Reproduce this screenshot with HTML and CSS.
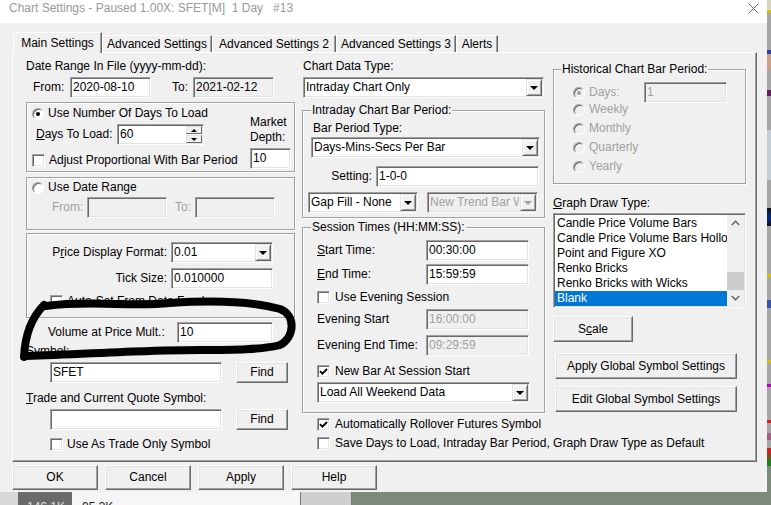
FILE: index.html
```html
<!DOCTYPE html>
<html>
<head>
<meta charset="utf-8">
<title>Chart Settings</title>
<link rel="stylesheet" href="styles.css">
</head>
<body>
<div class="screen">
  <div class="dialog">
    <div class="titlebar">
      <span class="title">Chart Settings - Paused 1.00X: SFET[M]  1 Day   #13</span>
      <svg class="close" viewBox="0 0 11 11"><path d="M0.5 0.5L10.5 10.5M10.5 0.5L0.5 10.5" stroke="#6a6a6a" stroke-width="1" fill="none"/></svg>
    </div>
    <div class="dlg-body">
      <div class="tabs">
        <div class="tab active t1">Main Settings</div>
        <div class="tab t2">Advanced Settings</div>
        <div class="tab t3">Advanced Settings 2</div>
        <div class="tab t4">Advanced Settings 3</div>
        <div class="tab t5">Alerts</div>
      </div>
      <div class="panel">
        <div class="col col-left">
          <div class="caption cap-date">Date Range In File (yyyy-mm-dd):</div>
          <div class="row row-date">
            <span class="lab lab-from">From:</span>
            <span class="field f-date">2020-08-10</span>
            <span class="lab lab-to">To:</span>
            <span class="field f-date ro">2021-02-12</span>
          </div>
          <div class="grp grp-days">
            <div class="days-main">
              <div class="opt opt-first"><span class="radio on"></span>Use Number Of Days To Load</div>
              <div class="row row-days">
                <span class="lab lab-days"><u>D</u>ays To Load:</span>
                <span class="field f-spin"><span class="txt">60</span><span class="spin"><span class="sb"><i class="tri-up"></i></span><span class="sb"><i class="tri-down"></i></span></span></span>
              </div>
              <div class="opt opt-adjust"><span class="check"></span>Adjust Proportional With Bar Period</div>
            </div>
            <div class="days-side">
              <div class="md-lbl">Market<br>Depth:</div>
              <span class="field f-md">10</span>
            </div>
          </div>
          <div class="grp grp-range">
            <div class="opt opt-range"><span class="radio"></span>Use Date Range</div>
            <div class="row row-range">
              <span class="lab dis lab-rfrom">From:</span><span class="field dis f-range"></span>
              <span class="lab dis lab-rto">To:</span><span class="field dis f-range"></span>
            </div>
          </div>
          <div class="grp grp-price">
            <div class="row row-pf"><span class="lab lab-pf">P<u>r</u>ice Display Format:</span><span class="field combo f-pf"><span class="txt">0.01</span><span class="dd"></span></span></div>
            <div class="row row-tick"><span class="lab lab-pf">Tick Size:</span><span class="field f-pf">0.010000</span></div>
            <div class="opt opt-auto"><span class="check"></span>Auto-Set From Data Feed</div>
          </div>
          <div class="row row-vol"><span class="lab lab-vol">Volume at Price Mult.:</span><span class="field f-vol">10</span></div>
          <div class="caption cap-symbol">Symbol:</div>
          <div class="row row-sym"><span class="field f-sym">SFET</span><span class="btn btn-find">Find</span></div>
          <div class="caption cap-trade"><u>T</u>rade and Current Quote Symbol:</div>
          <div class="row row-sym row-sym2"><span class="field f-sym"></span><span class="btn btn-find">Find</span></div>
          <div class="opt opt-tradeonly"><span class="check"></span>Use As Trade Only Symbol</div>
        </div>

        <div class="col col-mid">
          <div class="caption cap-cdt">Chart Data Type:</div>
          <div class="field combo f-cdt"><span class="txt">Intraday Chart Only</span><span class="dd"></span></div>
          <div class="grp grp-intraday">
            <div class="gtitle">Intraday Chart Bar Period:</div>
            <div class="caption cap-bpt">Bar Period Type:</div>
            <div class="field combo f-bpt"><span class="txt">Days-Mins-Secs Per Bar</span><span class="dd"></span></div>
            <div class="row row-setting"><span class="lab lab-setting">Setting:</span><span class="field f-setting">1-0-0</span></div>
            <div class="row row-gap">
              <span class="field combo f-gap"><span class="txt">Gap Fill - None</span><span class="dd"></span></span>
              <span class="field combo dis f-trend"><span class="txt">New Trend Bar W</span><span class="dd"></span></span>
            </div>
          </div>
          <div class="grp grp-session">
            <div class="gtitle">Session Times (HH:MM:SS):</div>
            <div class="row row-time rt1"><span class="lab lab-time"><u>S</u>tart Time:</span><span class="field f-time">00:30:00</span></div>
            <div class="row row-time rt2"><span class="lab lab-time"><u>E</u>nd Time:</span><span class="field f-time">15:59:59</span></div>
            <div class="opt opt-evening"><span class="check"></span>Use Evening Session</div>
            <div class="row row-time ev1"><span class="lab lab-time">Evening Start</span><span class="field dis f-time">16:00:00</span></div>
            <div class="row row-time ev2"><span class="lab lab-time">Evening End Time:</span><span class="field dis f-time">09:29:59</span></div>
            <div class="opt opt-newbar"><span class="check"><svg width="9" height="9" viewBox="0 0 9 9"><path d="M1 4.2L3.4 6.6L8 2" fill="none" stroke="#000" stroke-width="1.9"/></svg></span>New Bar At Session Start</div>
            <div class="field combo f-weekend"><span class="txt">Load All Weekend Data</span><span class="dd"></span></div>
          </div>
          <div class="opt opt-roll"><span class="check"><svg width="9" height="9" viewBox="0 0 9 9"><path d="M1 4.2L3.4 6.6L8 2" fill="none" stroke="#000" stroke-width="1.9"/></svg></span>Automatically Rollover Futures Symbol</div>
          <div class="opt opt-save"><span class="check"></span>Save Days to Load, Intraday Bar Period, Graph Draw Type as Default</div>
        </div>

        <div class="col col-right">
          <div class="grp grp-hist">
            <div class="gtitle">Historical Chart Bar Period:</div>
            <div class="row row-hdays"><span class="hopt"><span class="radio on dis"></span>Days:</span><span class="field dis f-hdays">1</span></div>
            <div class="hopt hl first"><span class="radio dis"></span>Weekly</div>
            <div class="hopt hl"><span class="radio dis"></span>Monthly</div>
            <div class="hopt hl"><span class="radio dis"></span>Quarterly</div>
            <div class="hopt hl"><span class="radio dis"></span>Yearly</div>
          </div>
          <div class="caption cap-gdt"><u>G</u>raph Draw Type:</div>
          <div class="listbox">
            <div class="items">
              <div class="item">Candle Price Volume Bars</div>
              <div class="item">Candle Price Volume Bars Hollow</div>
              <div class="item">Point and Figure XO</div>
              <div class="item">Renko Bricks</div>
              <div class="item">Renko Bricks with Wicks</div>
              <div class="item sel">Blank</div>
            </div>
            <div class="vscroll">
              <span class="arr"><svg width="9" height="6" viewBox="0 0 9 6"><path d="M0.8 5L4.5 1.3L8.2 5" fill="none" stroke="#606060" stroke-width="1.4"/></svg></span>
              <span class="track"><span class="thumb"></span></span>
              <span class="arr"><svg width="9" height="6" viewBox="0 0 9 6"><path d="M0.8 1L4.5 4.7L8.2 1" fill="none" stroke="#606060" stroke-width="1.4"/></svg></span>
            </div>
          </div>
          <div class="btn btn-scale">S<u>c</u>ale</div>
          <div class="btn btn-global">Apply Global Symbol Settings</div>
          <div class="btn btn-global second">Edit Global Symbol Settings</div>
        </div>

        <svg class="scribble" width="745" height="410" viewBox="0 0 745 410">
          <g transform="translate(-13,-53)" fill="none" stroke="#000" stroke-width="8" stroke-linecap="round" stroke-linejoin="round">
            <path d="M46 306 C 90 300, 130 307, 170 303 C 215 300, 255 302, 280 309 C 296 315, 295 337, 280 345 C 255 352, 200 349, 150 351 C 110 352, 70 355, 26 356"/>
            <path d="M44 305 C 31 318, 25 335, 24 357"/>
          </g>
        </svg>
      </div>
      <div class="buttons">
        <div class="btn btn-dlg">OK</div>
        <div class="btn btn-dlg">Cancel</div>
        <div class="btn btn-dlg">Apply</div>
        <div class="btn btn-dlg">Help</div>
      </div>
    </div>
  </div>
  <div class="side-strip"></div>
  <div class="bottom-strip">
    <span class="bs bs1"></span>
    <span class="bs bs2">146.1K</span>
    <span class="bs bs3">95.3K</span>
    <span class="bs bs4"></span>
    <span class="bs bs5"></span>
  </div>
</div>
</body>
</html>
```
FILE: styles.css
```css
* { box-sizing: border-box; }
html, body { margin: 0; padding: 0; }
body {
  width: 771px; height: 505px; overflow: hidden;
  background: #7c8a7c;
  font-family: "Liberation Sans", Arial, sans-serif;
  font-size: 12px; line-height: 15px; color: #000;
}
u { text-decoration: underline; text-underline-offset: 1px; }
.screen {
  display: grid;
  grid-template-columns: 767px 4px;
  grid-template-rows: 492px 13px;
  width: 771px; height: 505px;
}
.dialog {
  grid-column: 1; grid-row: 1;
  background: #f0f0f0;
  display: flex; flex-direction: column;
  overflow: hidden;
}
.titlebar {
  height: 23px; flex: none; background: #fff;
  display: flex; align-items: flex-start;
  padding: 1px 0 0 9px;
}
.title { color: #9a9a9a; white-space: pre; }
.close { margin-left: auto; margin-right: 8px; margin-top: 2px; width: 11px; height: 11px; display: block; }
.dlg-body { flex: 1; padding-top: 9px; }

.tabs { display: flex; align-items: flex-end; height: 20px; margin-left: 13px; position: relative; z-index: 1; }
.tab {
  height: 17px; padding-top: 1px; text-align: center; white-space: nowrap;
  border: 1px solid; border-bottom: 0;
  border-color: #fff #696969 #fff #fff;
  box-shadow: inset -1px 0 #a0a0a0;
  background: #f0f0f0;
}
.tab.active { height: 21px; margin-bottom: -1px; padding-top: 3px; }
.t1 { width: 89px; } .t2 { width: 110px; } .t3 { width: 124px; } .t4 { width: 120px; } .t5 { width: 42px; }

.panel {
  position: relative; display: flex; align-items: flex-start;
  margin-left: 12px; width: 745px; height: 410px;
  border: 1px solid; border-color: #fff #696969 #696969 #fff;
  box-shadow: inset -1px -1px #a0a0a0;
  padding-left: 13px;
}
.scribble { position: absolute; left: 0; top: 0; overflow: visible; pointer-events: none; }

.col { display: flex; flex-direction: column; align-items: flex-start; flex: none; }
.col-left { width: 269px; }
.col-mid { width: 243px; margin-left: 7px; }
.col-right { width: 193px; margin-left: 8px; }

.caption { height: 15px; white-space: nowrap; flex: none; }
.row { display: flex; align-items: center; flex: none; }
.opt { display: flex; align-items: center; height: 15px; white-space: nowrap; flex: none; }
.lab { flex: none; white-space: nowrap; }
.dis { color: #a0a0a0; }

.field {
  display: flex; align-items: center; flex: none;
  height: 21px; padding: 0 2px;
  background: #fff;
  border: 1px solid; border-color: #a0a0a0 #fff #fff #a0a0a0;
  box-shadow: inset 1px 1px #696969, inset -1px -1px #e3e3e3;
  white-space: nowrap; overflow: hidden;
}
.field.ro, .field.dis { background: #f0f0f0; }
.field.dis { color: #a0a0a0; }
.combo { padding-right: 0; }
.combo .txt { flex: 1; overflow: hidden; }
.dd {
  flex: none; align-self: stretch; width: 16px; margin: 1px;
  background: #f0f0f0;
  border: 1px solid; border-color: #e3e3e3 #696969 #696969 #e3e3e3;
  box-shadow: inset 1px 1px #fff, inset -1px -1px #a0a0a0;
  display: flex; align-items: center; justify-content: center;
}
.dd::after { content: ""; border-left: 4px solid transparent; border-right: 4px solid transparent; border-top: 4px solid #000; }
.dis .dd::after { border-top-color: #a0a0a0; }

.check {
  flex: none; width: 13px; height: 13px; margin-right: 4px;
  background: #fff;
  border: 1px solid; border-color: #a0a0a0 #fff #fff #a0a0a0;
  box-shadow: inset 1px 1px #696969, inset -1px -1px #e3e3e3;
  display: flex; align-items: center; justify-content: center;
}
.check svg { display: block; }
.radio {
  flex: none; width: 12px; height: 12px; margin-right: 4px;
  border-radius: 50%; background: #fff;
  border: 1px solid; border-color: #a0a0a0 #fff #fff #a0a0a0;
  box-shadow: inset 1px 1px #696969;
  position: relative;
}
.radio.on::after { content: ""; position: absolute; left: 3px; top: 3px; width: 4px; height: 4px; border-radius: 50%; background: #000; }
.radio.dis { background: #f0f0f0; }
.radio.dis.on::after { background: #a0a0a0; }

.btn {
  display: flex; align-items: center; justify-content: center; flex: none;
  background: #f0f0f0;
  border: 1px solid; border-color: #fff #696969 #696969 #fff;
  box-shadow: inset -1px -1px #a0a0a0, inset 1px 1px #e3e3e3;
  white-space: nowrap;
}

.grp {
  align-self: stretch; flex: none;
  display: flex; flex-direction: column; align-items: flex-start;
  border: 1px solid #a0a0a0;
  box-shadow: inset 1px 1px #fff, 1px 1px #fff;
}
.gtitle { margin-top: -8px; margin-left: 8px; padding: 0 1px; background: #f0f0f0; height: 15px; white-space: nowrap; }

/* left column */
.cap-date { margin-top: 6px; }
.row-date { margin-top: 3px; padding-left: 7px; }
.lab-from { width: 37px; }
.f-date { width: 81px; }
.lab-to { width: 21px; margin-left: 21px; }

.grp-days { flex-direction: row; align-items: flex-start; margin-top: 4px; height: 70px; }
.days-main { display: flex; flex-direction: column; align-items: flex-start; padding-left: 5px; }
.opt-first { margin-top: 3px; }
.row-days { margin-top: 3px; }
.lab-days { width: 81px; margin-left: 4px; }
.f-spin { width: 87px; padding-right: 0; }
.f-spin .txt { flex: 1; }
.spin { flex: none; align-self: stretch; width: 16px; display: flex; flex-direction: column; gap: 1px; margin: 1px 1px 1px 0; }
.sb {
  flex: 1; background: #f0f0f0;
  border: 1px solid; border-color: #e3e3e3 #696969 #696969 #e3e3e3;
  display: flex; align-items: center; justify-content: center;
}
.tri-up { border-left: 3px solid transparent; border-right: 3px solid transparent; border-bottom: 3px solid #000; }
.tri-down { border-left: 3px solid transparent; border-right: 3px solid transparent; border-top: 3px solid #000; }
.opt-adjust { margin-top: 8px; padding-left: 0; }
.days-side { margin-left: auto; margin-right: 3px; padding-top: 12px; display: flex; flex-direction: column; align-items: flex-start; }
.md-lbl { height: 30px; }
.f-md { width: 41px; margin-top: 3px; }

.grp-range { margin-top: 5px; height: 53px; padding-left: 5px; }
.opt-range { margin-top: 2px; }
.row-range { margin-top: 2px; padding-left: 20px; }
.lab-rfrom { width: 35px; }
.f-range { width: 80px; }
.lab-rto { width: 20px; margin-left: 8px; }

.grp-price { margin-top: 3px; height: 85px; }
.row-pf { margin-top: 8px; }
.lab-pf { width: 140px; text-align: right; margin-right: 4px; }
.f-pf { width: 102px; }
.row-tick { margin-top: 5px; }
.opt-auto { margin-top: 5px; padding-left: 23px; }

.row-vol { margin-top: 4px; padding-left: 22px; }
.lab-vol { width: 129px; }
.f-vol { width: 96px; }
.cap-symbol { margin-top: 1px; }
.row-sym { margin-top: 3px; padding-left: 24px; }
.f-sym { width: 172px; }
.btn-find { width: 52px; height: 21px; margin-left: 14px; }
.cap-trade { margin-top: 8px; }
.opt-tradeonly { margin-top: 7px; padding-left: 24px; }

/* middle column */
.cap-cdt { margin-top: 6px; padding-left: 1px; }
.f-cdt { width: 241px; margin-top: 3px; margin-left: 1px; }
.grp-intraday { margin-top: 12px; height: 108px; }
.cap-bpt { margin-top: 3px; padding-left: 10px; }
.f-bpt { width: 229px; margin-top: 1px; margin-left: 8px; }
.row-setting { margin-top: 8px; }
.lab-setting { width: 69px; text-align: right; margin-right: 4px; }
.f-setting { width: 163px; }
.row-gap { margin-top: 5px; padding-left: 5px; }
.f-gap { width: 110px; }
.f-trend { width: 111px; margin-left: 9px; }

.grp-session { margin-top: 9px; height: 186px; }
.row-time { padding-left: 14px; }
.lab-time { width: 109px; }
.f-time { width: 103px; }
.rt1 { margin-top: 5px; }
.rt2 { margin-top: 3px; }
.opt-evening { margin-top: 5px; padding-left: 14px; }
.ev1 { margin-top: 4px; }
.ev2 { margin-top: 5px; }
.opt-newbar { margin-top: 8px; padding-left: 14px; }
.f-weekend { width: 213px; margin-top: 3px; margin-left: 14px; }
.opt-roll { margin-top: 4px; padding-left: 15px; }
.opt-save { margin-top: 4px; padding-left: 15px; }
.col-mid .check { margin-right: 5px; }

/* right column */
.grp-hist { margin-top: 16px; height: 115px; color: #a0a0a0; }
.grp-hist .gtitle { margin-left: 7px; color: #000; }
.row-hdays { margin-top: 5px; padding-left: 19px; }
.hopt { display: flex; align-items: center; height: 19px; white-space: nowrap; flex: none; }
.row-hdays .hopt { width: 71px; }
.f-hdays { width: 83px; }
.hl { padding-left: 19px; }
.hl.first { margin-top: -3px; }
.cap-gdt { margin-top: 12px; }
.listbox {
  align-self: stretch; flex: none; height: 95px; margin-top: 2px;
  display: flex; background: #fff; padding: 1px;
  border: 1px solid; border-color: #a0a0a0 #fff #fff #a0a0a0;
  box-shadow: inset 1px 1px #696969, inset -1px -1px #e3e3e3;
}
.items { flex: 1; min-width: 0; padding-top: 1px; }
.item { height: 15px; padding-left: 2px; white-space: nowrap; overflow: hidden; }
.item.sel { background: #0078d7; color: #fff; }
.vscroll { width: 17px; flex: none; display: flex; flex-direction: column; background: #f0f0f0; }
.arr { height: 16px; flex: none; display: flex; align-items: center; justify-content: center; }
.arr svg { display: block; }
.track { flex: 1; display: flex; flex-direction: column; justify-content: flex-end; }
.thumb { height: 18px; background: #cdcdcd; }
.btn-scale { width: 80px; height: 26px; margin-top: 8px; }
.btn-global { width: 182px; height: 26px; margin-left: 2px; margin-top: 11px; }
.btn-global.second { margin-top: 7px; }

.buttons { display: flex; gap: 7px; margin: 3px 0 0 12px; }
.btn-dlg { width: 86px; height: 25px; }

/* background application behind dialog */
.side-strip {
  grid-column: 2; grid-row: 1 / 3;
  background: linear-gradient(to bottom,
    #d8d4c0 0, #d8d4c0 10px, #d4c000 10px, #d4c000 13px, #a6a6a6 13px, #a6a6a6 50px,
    #3040a0 50px, #3040a0 54px, #c8a090 54px, #c8a090 70px, #a6a6a6 70px, #a6a6a6 90px,
    #602060 90px, #602060 96px, #a6a6a6 96px, #a6a6a6 130px, #c4ccd6 130px, #c4ccd6 180px,
    #a6a6a6 180px, #a6a6a6 208px, #101010 208px, #0a2a80 218px, #101010 226px, #a6a6a6 226px,
    #a6a6a6 274px, #d4c000 274px, #d4c000 277px, #a6a6a6 277px, #a6a6a6 300px, #4050a0 300px,
    #4050a0 308px, #a6a6a6 308px, #a6a6a6 360px, #d4c000 360px, #d4c000 363px, #a6a6a6 363px,
    #a6a6a6 384px, #c000c0 384px, #c000c0 387px, #a6a6a6 387px, #a6a6a6 420px, #d02020 420px,
    #d02020 423px, #a6a6a6 423px, #a6a6a6 433px, #a06080 433px, #a06080 440px, #a6a6a6 440px,
    #a6a6a6 448px, #d02020 448px, #d02020 451px, #208020 462px, #208020 466px, #7c8a7c 466px);
}
.bottom-strip { grid-column: 1; grid-row: 2; display: flex; overflow: hidden; }
.bs { flex: none; height: 13px; padding-top: 8px; font-size: 12px; line-height: 15px; white-space: nowrap; overflow: hidden; }
.bs1 { width: 18px; background: #d8d8d8; }
.bs2 { width: 54px; background: #6a6a6a; color: #e0e0e0; padding-left: 9px; }
.bs3 { width: 228px; background: #f6f6f6; color: #222; padding-left: 10px; }
.bs4 { width: 52px; background: #cfcfcf; border-left: 1px solid #777; border-right: 1px solid #777; }
.bs5 { flex: 1; background: #7c8a7c; }
```
